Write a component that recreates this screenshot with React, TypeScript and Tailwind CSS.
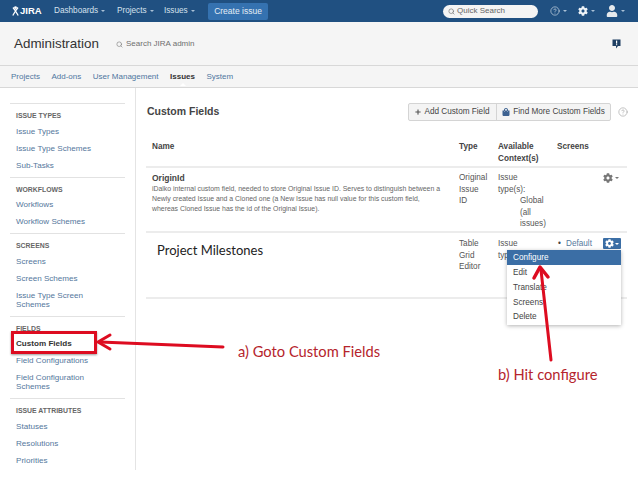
import { CircleHelp, Search } from 'lucide-react';
import { FaCog, FaUser, FaPlus, FaShoppingBag } from 'react-icons/fa';

const font = "font-['Liberation_Sans',Arial,sans-serif]";

const sidebar = [
  { title: 'ISSUE TYPES', items: ['Issue Types', 'Issue Type Schemes', 'Sub-Tasks'] },
  { title: 'WORKFLOWS', items: ['Workflows', 'Workflow Schemes'] },
  { title: 'SCREENS', items: ['Screens', 'Screen Schemes', 'Issue Type Screen Schemes'] },
  { title: 'FIELDS', items: ['Custom Fields', 'Field Configurations', 'Field Configuration Schemes'] },
  { title: 'ISSUE ATTRIBUTES', items: ['Statuses', 'Resolutions', 'Priorities'] },
];

const Caret = ({ className = 'border-t-[#a9c0d6]' }: { className?: string }) => (
  <span className={`inline-block w-0 h-0 border-x-[2px] border-x-transparent border-t-[2px] ${className}`}></span>
);

const TopBar = () => (
  <div className="h-[22px] bg-[#205081] flex items-center text-[8.2px] text-[#d6e2ee] shrink-0">
    <div className="flex items-center ml-3 w-[31px] text-white font-bold text-[9.5px]">
      <svg width="7" height="10" viewBox="0 0 7 10" className="mr-px">
        <circle cx="3.5" cy="1.6" r="1.4" fill="#fff" />
        <path d="M1 1.5 L3.5 5 L6 1.5 M0.8 9.5 L3.5 5 L6.2 9.5" stroke="#fff" strokeWidth="1.3" fill="none" />
      </svg>
      JIRA
    </div>
    <div className="flex items-center gap-[3px] ml-[11px] w-[63px]">Dashboards <Caret /></div>
    <div className="flex items-center gap-[3px] w-[47px]">Projects <Caret /></div>
    <div className="flex items-center gap-[3px] w-[44px]">Issues <Caret /></div>
    <div className="bg-[#3572b0] rounded-[2px] h-[17px] w-[60px] flex items-center justify-center text-[8.5px] text-[#e4edf5]">
      Create issue
    </div>
    <div className="ml-auto w-[95px] h-[13px] bg-[#f4f4f4] rounded-full flex items-center pl-[5px] gap-[2px] text-[#666] text-[8px]">
      <Search size={7} className="text-[#666]" strokeWidth={2} />
      Quick Search
    </div>
    <div className="flex items-center gap-[3px] ml-[12px] w-[28px]">
      <CircleHelp size={10} className="text-[#dbe5ef]" strokeWidth={1.5} /> <Caret />
    </div>
    <div className="flex items-center gap-[3px] w-[28px]">
      <FaCog size={10} className="text-[#eef3f8]" /> <Caret />
    </div>
    <div className="flex items-center gap-[3px] mr-[10px] w-[22px]">
      <FaUser size={12} className="text-[#e6e9ec]" /> <Caret />
    </div>
  </div>
);

const AdminHeader = () => (
  <div className="h-[44px] bg-[#f5f5f5] border-b border-[#d8d8d8] flex items-center pl-[14px] shrink-0 pt-[1px]">
    <div className="text-[13.4px] text-[#333] w-[102px]">Administration</div>
    <Search size={7} className="text-[#777] mr-[3px]" strokeWidth={2} />
    <div className="text-[8px] text-[#6f6f6f]">Search JIRA admin</div>
    <svg width="9" height="10" viewBox="0 0 9 10" className="ml-auto mr-[17px]">
      <path d="M0.5 0.5 H8.5 V7 H6 L4 9.5 V7 H0.5 Z" fill="#1f3f63" />
      <rect x="4" y="1.6" width="1.2" height="3" fill="#fff" />
      <rect x="4" y="5.2" width="1.2" height="1" fill="#fff" />
    </svg>
  </div>
);

const AdminNav = () => (
  <div className="h-[22px] bg-[#f5f5f5] border-b border-[#d8d8d8] flex items-center pl-[11px] gap-[11.5px] text-[8px] text-[#4f76a0] shrink-0 relative">
    <span>Projects</span>
    <span>Add-ons</span>
    <span>User Management</span>
    <span className="font-bold text-[#333] relative">
      Issues
      <span className="absolute left-[10px] top-[12px] w-0 h-0 border-x-[3px] border-x-transparent border-b-[3px] border-b-white"></span>
    </span>
    <span>System</span>
  </div>
);

const Sidebar = () => (
  <div className="w-[136px] h-[382px] border-r border-[#e4e4e4] pt-[15px] shrink-0">
    {sidebar.map((section) => (
      <div key={section.title} className="mx-[10px] border-t border-[#e2e2e2] pt-[7px] pb-[3px]">
        <div className="text-[6.9px] leading-[9px] font-bold text-[#666] px-[6px] mb-[2.5px] h-[9px]">{section.title}</div>
        {section.items.map((item) => (
          <div
            key={item}
            className={`text-[8.1px] leading-[9px] pl-[6px] pr-[23px] py-[4px] ${
              item === 'Custom Fields' ? 'font-bold text-[#333]' : 'text-[#54779c]'
            }`}
          >
            {item}
          </div>
        ))}
      </div>
    ))}
  </div>
);

const Dropdown = () => (
  <div className="absolute left-[361px] top-[17px] w-[114px] h-[75px] bg-white shadow-[0_1px_4px_rgba(0,0,0,0.3)] text-[8.2px] text-[#444] z-10">
    <div className="h-[15px] bg-[#3b6ea5] text-white flex items-center px-[6px]">Configure</div>
    <div className="h-[15px] mt-[0.5px] flex items-center px-[6px]">Edit</div>
    <div className="h-[14.5px] flex items-center px-[6px]">Translate</div>
    <div className="h-[14.5px] flex items-center px-[6px]">Screens</div>
    <div className="h-[14.5px] flex items-center px-[6px]">Delete</div>
  </div>
);

const FieldsTable = () => (
  <div className="w-[481px] text-[8.2px] leading-[11.5px] text-[#555] mt-[10px]">
    {/* head */}
    <div className="h-[37px] border-b-2 border-[#ececec] flex pt-[10px] font-bold text-[#444]">
      <div className="w-[313px] pl-[6px]">Name</div>
      <div className="w-[39px]">Type</div>
      <div className="w-[59px]">
        Available
        <br />
        Context(s)
      </div>
      <div>Screens</div>
    </div>
    {/* OriginId row */}
    <div className="h-[65px] border-b-2 border-[#ececec] flex pt-[4px]">
      <div className="w-[313px] pl-[6px] pr-[10px]">
        <div className="font-bold text-[8.5px] leading-[9px] text-[#444] mt-[2px] mb-[1px]">OriginId</div>
        <div className="text-[6.9px] leading-[10px] text-[#666] whitespace-nowrap">
          iDalko internal custom field, needed to store Original Issue ID. Serves to distinguish between a
          <br />
          Newly created Issue and a Cloned one (a New Issue has null value for this custom field,
          <br />
          whereas Cloned Issue has the id of the Original Issue).
        </div>
      </div>
      <div className="w-[39px]">
        Original
        <br />
        Issue
        <br />
        ID
      </div>
      <div className="w-[59px]">
        Issue
        <br />
        type(s):
        <div className="pl-[22px]">
          Global
          <br />
          (all
          <br />
          issues)
        </div>
      </div>
      <div className="ml-[46px] flex items-start gap-[2px] text-[#777] pt-[1px]">
        <FaCog size={10} />
        <Caret className="border-t-[#777] mt-[4px]" />
      </div>
    </div>
    {/* Project Milestones row */}
    <div className="h-[66px] border-b-2 border-[#ececec] flex pt-[5px] relative">
      <div className="w-[313px] pl-[11px] pt-[5px] font-['Lato',sans-serif] text-[13px] leading-[14px] text-[#222]">
        Project Milestones
      </div>
      <div className="w-[39px]">
        Table
        <br />
        Grid
        <br />
        Editor
      </div>
      <div className="w-[59px]">
        Issue
        <br />
        type(s):
      </div>
      <div className="flex text-[#54779c] items-start">
        <span className="text-[#444] w-[9px] pl-[1px]">•</span>
        Default
      </div>
      <div className="absolute left-[457px] top-[5px] w-[18px] h-[11px] bg-[#3b6ea5] rounded-[1px] flex items-center justify-center gap-[1px] text-white">
        <FaCog size={9} />
        <Caret className="border-t-white" />
      </div>
      <Dropdown />
    </div>
  </div>
);

const MainPanel = () => (
  <div className="pl-[10px] pt-[15px] flex-1 min-w-0">
    <div className="flex items-center h-[18px]">
      <div className="text-[10.5px] font-bold text-[#444] w-[262px] pl-px">Custom Fields</div>
      <div className="flex h-[18px] border border-[#d4d4d4] rounded-[2px] bg-[#f4f4f4] text-[8.2px] text-[#444]">
        <div className="w-[88px] flex items-center justify-center gap-[3px] border-r border-[#d4d4d4]">
          <FaPlus size={6} className="text-[#555]" /> Add Custom Field
        </div>
        <div className="w-[113px] flex items-center justify-center gap-[3px]">
          <FaShoppingBag size={8} className="text-[#3d6291]" /> Find More Custom Fields
        </div>
      </div>
      <CircleHelp size={10} className="ml-[7px] text-[#999]" strokeWidth={1.4} />
    </div>
    <FieldsTable />
  </div>
);

const Annotations = () => (
  <>
    <div className="absolute left-[11px] top-[331px] w-[86px] h-[23px] border-[3px] border-[#dd0c20] shadow-[0_1px_2px_rgba(0,0,0,0.4)]"></div>
    <svg width="638" height="479" className="absolute left-0 top-0 z-20 pointer-events-none">
      <g stroke="#dd0c20" fill="none" strokeLinecap="round" strokeLinejoin="round">
        <path d="M223 347 L100 342" strokeWidth="3" />
        <path d="M110 335 L98 342 L110 349" strokeWidth="3" />
        <path d="M551 360 L541 270" strokeWidth="3" />
        <path d="M534 278 L540 267 L548 277" strokeWidth="3.5" />
      </g>
    </svg>
    <div className="absolute left-[238px] top-[342px] font-['Lato',sans-serif] text-[14.7px] leading-[18px] text-[#b5242c] z-20">
      a) Goto Custom Fields
    </div>
    <div className="absolute left-[498px] top-[365px] font-['Lato',sans-serif] text-[14.7px] leading-[18px] text-[#b5242c] z-20">
      b) Hit configure
    </div>
  </>
);

const App = () => (
  <div className={`relative w-[638px] h-[479px] overflow-hidden bg-white flex flex-col ${font}`}>
    <TopBar />
    <AdminHeader />
    <AdminNav />
    <div className="flex">
      <Sidebar />
      <MainPanel />
    </div>
    <Annotations />
  </div>
);

export default App;
